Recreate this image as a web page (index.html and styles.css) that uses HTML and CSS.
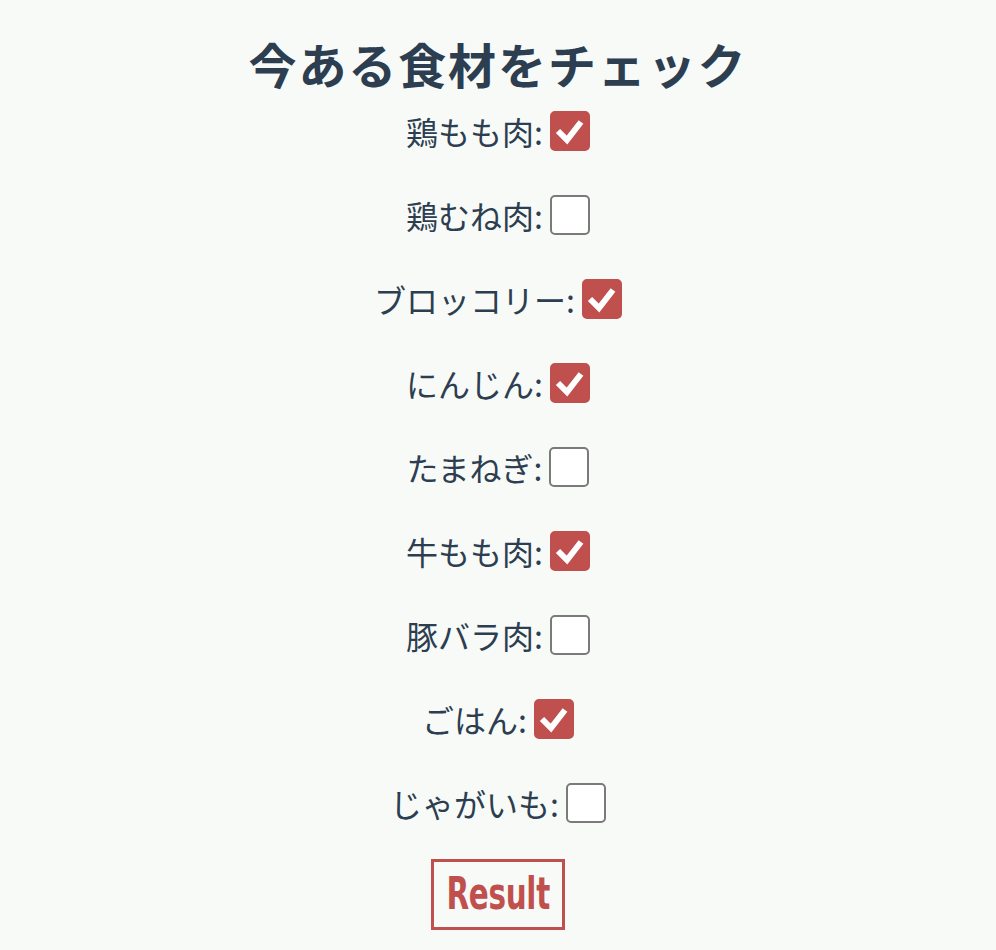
FILE: index.html
```html
<!DOCTYPE html>
<html lang="ja">
<head>
<meta charset="utf-8">
<title>今ある食材をチェック</title>
<link rel="stylesheet" href="styles.css">
</head>
<body>
<main class="page">
  <h1 class="title">今ある食材をチェック</h1>
  <form class="list">
    <label class="row"><span class="name">鶏もも肉:</span><input type="checkbox" checked><span class="box"><svg viewBox="0 0 40 40"><polyline points="8,20 17,29 31,11"/></svg></span></label>
    <label class="row"><span class="name">鶏むね肉:</span><input type="checkbox"><span class="box"><svg viewBox="0 0 40 40"><polyline points="8,20 17,29 31,11"/></svg></span></label>
    <label class="row"><span class="name">ブロッコリー:</span><input type="checkbox" checked><span class="box"><svg viewBox="0 0 40 40"><polyline points="8,20 17,29 31,11"/></svg></span></label>
    <label class="row"><span class="name">にんじん:</span><input type="checkbox" checked><span class="box"><svg viewBox="0 0 40 40"><polyline points="8,20 17,29 31,11"/></svg></span></label>
    <label class="row"><span class="name">たまねぎ:</span><input type="checkbox"><span class="box"><svg viewBox="0 0 40 40"><polyline points="8,20 17,29 31,11"/></svg></span></label>
    <label class="row"><span class="name">牛もも肉:</span><input type="checkbox" checked><span class="box"><svg viewBox="0 0 40 40"><polyline points="8,20 17,29 31,11"/></svg></span></label>
    <label class="row"><span class="name">豚バラ肉:</span><input type="checkbox"><span class="box"><svg viewBox="0 0 40 40"><polyline points="8,20 17,29 31,11"/></svg></span></label>
    <label class="row"><span class="name">ごはん:</span><input type="checkbox" checked><span class="box"><svg viewBox="0 0 40 40"><polyline points="8,20 17,29 31,11"/></svg></span></label>
    <label class="row"><span class="name">じゃがいも:</span><input type="checkbox"><span class="box"><svg viewBox="0 0 40 40"><polyline points="8,20 17,29 31,11"/></svg></span></label>
    <button type="button" class="result"><span class="result-label">Result</span></button>
  </form>
</main>
</body>
</html>
```
FILE: styles.css
```css
html, body {
  margin: 0;
  padding: 0;
  background: #f8faf8;
}
.page {
  display: flex;
  flex-direction: column;
  align-items: center;
  padding-top: 34px;
  color: #2c3e50;
  font-family: "Noto Sans CJK JP", "Noto Sans", sans-serif;
}
.title {
  margin: 0 0 19px;
  font-size: 48px;
  line-height: 58px;
  font-weight: 700;
  letter-spacing: 1.9px;
}
.list {
  display: flex;
  flex-direction: column;
  align-items: center;
  gap: 44px;
}
.row {
  display: flex;
  align-items: center;
  gap: 7px;
  height: 40px;
  font-size: 32px;
  cursor: pointer;
}
.name {
  line-height: 40px;
}
.row input {
  display: none;
}
.box {
  box-sizing: border-box;
  width: 40px;
  height: 40px;
  border: 2px solid #7a7a7a;
  border-radius: 5px;
  background: #ffffff;
  display: flex;
  overflow: hidden;
}
.box svg {
  width: 40px;
  height: 40px;
  margin: -2px;
  flex: none;
  display: none;
}
.box polyline {
  fill: none;
  stroke: #ffffff;
  stroke-width: 6;
  stroke-linecap: butt;
  stroke-linejoin: miter;
}
.row input:checked + .box {
  background: #c0504d;
  border-color: #c0504d;
}
.row input:checked + .box svg {
  display: block;
}
.result {
  margin-top: -8px;
  box-sizing: border-box;
  width: 134px;
  height: 71px;
  border: 3px solid #c0504d;
  background: transparent;
  color: #c0504d;
  font-family: "DejaVu Sans", sans-serif;
  font-weight: 700;
  font-size: 44px;
  line-height: 1;
  padding: 0 0 2px;
  display: flex;
  align-items: center;
  justify-content: center;
  cursor: pointer;
}
.result-label {
  display: inline-block;
  transform: scaleX(0.67);
  letter-spacing: -0.5px;
}
```
